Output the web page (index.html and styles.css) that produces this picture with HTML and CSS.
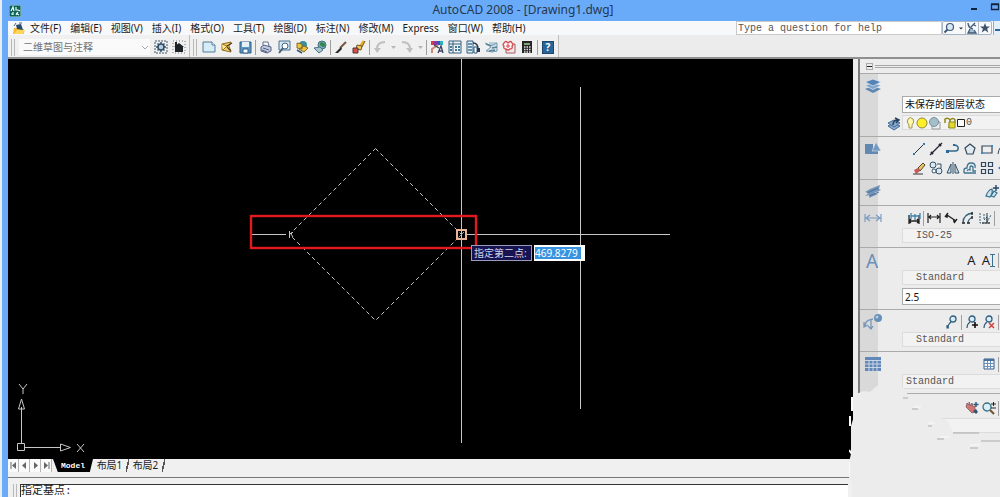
FILE: index.html
```html
<!DOCTYPE html>
<html lang="zh-CN">
<head>
<meta charset="utf-8">
<title>AutoCAD 2008 - [Drawing1.dwg]</title>
<link rel="stylesheet" href="styles.css">
</head>
<body>
<div class="window">
  <header class="titlebar">
    <svg class="app-icon" viewBox="0 0 12 12"><rect width="12" height="12" fill="#0d6158"/><path d="M0 0h12v12H0z" fill="none" stroke="#a9d8d0"/><path d="M2 6l2-4 1 4M7 2v3h2M9 5l2 1M2 9h2M4 7v3M7 8l3 2M7 10l2-3" stroke="#e8fff8" fill="none" stroke-width="1.2"/></svg>
    <h1 class="title">AutoCAD 2008 - [Drawing1.dwg]</h1>
    <div class="window-buttons">
      <button aria-label="最小化"><svg viewBox="0 0 10 10"><path d="M2 7h6" stroke="#14233c" stroke-width="2"/></svg></button>
      <button aria-label="最大化"><svg viewBox="0 0 10 10"><path d="M1.500 2.500h7v5h-7zM1 2h8" fill="none" stroke="#14233c" stroke-width="1.300"/></svg></button>
    </div>
  </header>

  <div class="frame">
    <nav class="menubar">
      <svg class="doc-icon" viewBox="0 0 12 13"><path d="M1 6h4l1 1h5v5H0z" fill="#f3bb2c"/><path d="M3 3l5-1 2 6-6-1z" fill="#27496d"/><path d="M1 4l2-3M6 1l3 0" stroke="#496780"/><path d="M1 12l3-4h8l-2 4z" fill="#ffd65b"/></svg>
      <button>文件(F)</button><button>编辑(E)</button><button>视图(V)</button><button>插入(I)</button><button>格式(O)</button><button>工具(T)</button><button>绘图(D)</button><button>标注(N)</button><button>修改(M)</button><button>Express</button><button>窗口(W)</button><button>帮助(H)</button>
      <input class="help-search" type="text" aria-label="Help" placeholder="Type a question for help">
      <div class="info-buttons">
        <button class="wide" aria-label="搜索"><svg viewBox="0 0 22 12"><circle cx="7" cy="5" r="3.500" fill="#d8e9f6" stroke="#3e5877" stroke-width="1.200"/><path d="M4.500 7.500L1.500 10.500" stroke="#3e5877" stroke-width="2"/><path d="M16 5.500h4l-2 2z" fill="#333"/></svg></button>
        <button aria-label="通讯中心"><svg viewBox="0 0 12 12"><path d="M2 1q0 5 5 6M5 5l4-4M8 3l2 1M4 7l-2 4h8l-2-3" fill="#a9bed2" stroke="#3e5877" stroke-width="1.300"/></svg></button>
        <button aria-label="收藏夹"><svg viewBox="0 0 12 12"><path d="M6 1l1.300 3.400L11 4.500 8.100 6.800 9.200 10.500 6 8.300 2.800 10.500 3.900 6.800 1 4.500l3.700-.1z" fill="#3e4f69"/></svg></button>
      </div>
      <button class="doc-minimize" aria-label="最小化文档"><svg viewBox="0 0 10 10"><path d="M3 7h6" stroke="#31649a" stroke-width="2"/></svg></button>
    </nav>

    <div class="toolbars">
      <div class="toolbar workspace">
        <i class="grip"></i>
        <select class="workspace-select" aria-label="工作空间" disabled><option>二维草图与注释</option></select>
        <button class="tool" aria-label="工作空间设置"><svg viewBox="0 0 14 14"><path d="M1 1h12v12H1z" fill="none" stroke="#40576d" stroke-dasharray="2 1"/><circle cx="7" cy="7" r="3" fill="#b9cee0" stroke="#304c66" stroke-width="1.500"/><path d="M7 2v2M7 10v2M2 7h2M10 7h2M3.500 3.500l1.500 1.500M9 9l1.500 1.500M10.500 3.500L9 5M5 9l-1.500 1.500" stroke="#304c66" stroke-width="1.400"/></svg></button>
        <button class="tool" aria-label="我的工作空间"><svg viewBox="0 0 14 14"><path d="M1 1h12v12H1z" fill="none" stroke="#777" stroke-dasharray="1 2"/><path d="M2 7l5-4 5 4h-1v5H3V7z" fill="#1e2225"/><path d="M4 2v4" stroke="#222" stroke-width="2"/></svg></button>
      </div>
      <div class="toolbar standard">
        <i class="grip"></i>
        <button class="tool" aria-label="新建"><svg viewBox="0 0 14 14"><path d="M1 2h9l3 3v7H1z" fill="#d6edf7" stroke="#527b98"/><path d="M10 2v3h3" fill="#fff" stroke="#527b98"/></svg></button>
        <button class="tool" aria-label="打开"><svg viewBox="0 0 14 14"><path d="M2 4l9-2-2 4 2 6-9-2z" fill="#f4cf61" stroke="#8a6c28"/><path d="M2 4l5 2-4 4" fill="#fae69a" stroke="#9c7425"/><path d="M7 6l5-3M7 7l4 4" stroke="#4b3c25" stroke-width="1.300"/></svg></button>
        <button class="tool" aria-label="保存"><svg viewBox="0 0 14 14"><path d="M2 2h11v11H2z" fill="#5b95c1" stroke="#315e87"/><path d="M4 2h7v5H4z" fill="#e5f1f9"/><path d="M5 9h5v4H5z" fill="#fff" stroke="#315e87"/></svg></button>
        <i class="sep"></i>
        <button class="tool" aria-label="打印"><svg viewBox="0 0 14 14"><path d="M4 5V2h5l1 4" fill="#fff" stroke="#656f8d"/><path d="M2 7l3-2 7 2v4l-4 2-6-2z" fill="#c3cae0" stroke="#515f80"/><path d="M4 8l6 2M3 10l5 2" stroke="#515f80"/></svg></button>
        <button class="tool" aria-label="打印预览"><svg viewBox="0 0 14 14"><path d="M2 1h11v9H2z" fill="#d5e7f2" stroke="#50718f"/><circle cx="8" cy="6" r="3" fill="#fff" stroke="#3e6486"/><path d="M6 8l-4 5" stroke="#45627c" stroke-width="2"/></svg></button>
        <button class="tool" aria-label="发布"><svg viewBox="0 0 14 14"><circle cx="8" cy="5" r="4" fill="#3b8e9e"/><path d="M2 3l5 1v5l-5-1zM4 9l5-3 4 2-4 4z" fill="#f1c43b" stroke="#816b28"/><path d="M2 10l5 3" stroke="#315671" stroke-width="1.500"/></svg></button>
        <button class="tool" aria-label="三维 DWF"><svg viewBox="0 0 14 14"><circle cx="9" cy="5" r="4" fill="#70a9c1" stroke="#45717f"/><path d="M8 2q-3 3 2 5 4-1 1-4z" fill="#378548"/><path d="M1 8l6-1 3 3-4 3z" fill="#a9c6cf" stroke="#4b7485"/></svg></button>
        <i class="sep"></i>
        <button class="tool" aria-label="特性匹配"><svg viewBox="0 0 14 14"><path d="M12 2L6 8" stroke="#765944" stroke-width="2"/><path d="M7 7l1 2-4 4H1z" fill="#292929"/></svg></button>
        <button class="tool" aria-label="块编辑器"><svg viewBox="0 0 14 14"><path d="M8 7l4-6" stroke="#e7ae2b" stroke-width="3"/><path d="M5 5l5 1-1 4-5-1z" fill="#f1c764" stroke="#6c5722"/><path d="M1 8h5v5H1z" fill="#d55145" stroke="#4e3835"/><path d="M13 1l-3 6" stroke="#775626"/></svg></button>
        <i class="sep"></i>
        <button class="tool" aria-label="放弃"><svg viewBox="0 0 14 14"><path d="M12 2Q4 2 4 9" fill="none" stroke="#bfc0c2" stroke-width="2"/><path d="M1 8h7l-4 5z" fill="#bfc0c2"/></svg></button>
        <button class="drop" aria-label="放弃列表"><svg viewBox="0 0 5 5"><path d="M0 1h5L2.500 4z" fill="#b6b6b6"/></svg></button>
        <button class="tool" aria-label="重做"><svg viewBox="0 0 14 14"><path d="M2 2q8 0 8 7" fill="none" stroke="#bfc0c2" stroke-width="2"/><path d="M6 8h7l-3 5z" fill="#bfc0c2"/></svg></button>
        <button class="drop" aria-label="重做列表"><svg viewBox="0 0 5 5"><path d="M0 1h5L2.500 4z" fill="#b6b6b6"/></svg></button>
        <i class="sep"></i>
        <button class="tool" aria-label="特性"><svg viewBox="0 0 14 14"><path d="M1 1h3v4H1z" fill="#d23d48"/><path d="M4 1h3v4H4z" fill="#8a36a4"/><path d="M7 1h3v4H7z" fill="#3159b7"/><path d="M10 1h3v4h-3z" fill="#32b0be"/><path d="M2 13V9l6-4" fill="none" stroke="#c98972" stroke-width="2"/><path d="M8 13l3-7 2 7M9 11h4M4 5l5 3" fill="none" stroke="#3b435c" stroke-width="1.300"/></svg></button>
        <button class="tool" aria-label="设计中心"><svg viewBox="0 0 14 14"><path d="M1 1h12v12H1z" fill="#eaf4f9" stroke="#395e7a"/><path d="M5 1v12M1 4h12" stroke="#395e7a"/><path d="M3 6v6M8 6v6M11 6v6" stroke="#417699" stroke-width="2" stroke-dasharray="2 1"/></svg></button>
        <button class="tool" aria-label="工具选项板"><svg viewBox="0 0 14 14"><path d="M1 1h6v12H1z" fill="#e5f1f7" stroke="#315b7a"/><path d="M2 4h4M2 7h4M2 10h4" stroke="#3a769d" stroke-width="1.500"/><path d="M7 3q5 0 5 6" fill="none" stroke="#29374a" stroke-width="1.500"/><path d="M8 7h3v6H8z" fill="#fff" stroke="#315b7a"/><path d="M11 8h3v4h-3z" fill="#29374a"/></svg></button>
        <button class="tool" aria-label="图纸集管理器"><svg viewBox="0 0 14 14"><path d="M5 2h8v10H6z" fill="#b5cedc"/><path d="M1 3l6 3 6-3v8l-5 1-6-1 5-4" fill="#d1e1ea" stroke="#779caf"/><path d="M2 4l5 2M8 8l5-1M5 11l6-1" stroke="#5a8298" stroke-width="1.500"/></svg></button>
        <button class="tool" aria-label="标记集管理器"><svg viewBox="0 0 14 14"><path d="M4 4h9v9H4z" fill="#f2e8e8" stroke="#a35b62"/><path d="M2 3q2-3 4 0 3-3 4 0 2 2 0 3 1 3-2 3-2 2-4 0-3 0-2-3-2-1 0-3z" fill="#fff2f2" stroke="#d34951" stroke-width="1.300"/><path d="M4 6h4M6 4v4" stroke="#d34951"/></svg></button>
        <button class="tool" aria-label="快速计算器"><svg viewBox="0 0 14 14"><path d="M2 1h10v12H2z" fill="#252525"/><path d="M4 3h6v2H4z" fill="#80a777"/><path d="M4 7h7M4 9.500h7M4 12h7" stroke="#e3e3e3" stroke-width="1.300" stroke-dasharray="1.500 1"/></svg></button>
        <i class="sep"></i>
        <button class="tool help" aria-label="帮助"><span>?</span></button>
      </div>
    </div>

    <div class="workspace-area">
      <main class="document">
        <section class="canvas" aria-label="绘图区">
          <svg class="drawing" width="845" height="401" viewBox="0 0 845 401">
            <g fill="none" stroke="#c7c7c7">
              <path d="M367.500 90.500l86 86-86 86-86-86z" stroke-dasharray="4 3"/>
              <path d="M453.500 1v384M572.500 29v322M244 176.500h34M458 176.500h204"/>
              <path d="M281.500 173v7M285 174l-2 2 2 3"/>
              <path d="M9.500 385.500h7v7h-7zM13.500 385v-36M17 389.500h35M10.500 351l3-10 3 10zM52.500 386v7l10-3.500z"/>
              <path d="M11 326l4 5 4-5M15 331v5M69 386l7 8M76 386l-7 8"/>
            </g>
            <rect x="243" y="158" width="225" height="32" fill="none" stroke="#e01a1e" stroke-width="2.400"/>
            <rect x="449" y="172" width="9" height="9" fill="none" stroke="#eab498" stroke-width="2"/>
            <path d="M451 179l5-5" stroke="#aaa"/>
          </svg>
          <div class="prompt">
            <label for="point">指定第二点:</label>
            <div class="point-box"><input id="point" type="text" value="469.8279"></div>
          </div>
        </section>
        <nav class="sheet-tabs">
          <button class="step" aria-label="第一个"><svg viewBox="0 0 9 9"><path d="M2 1v7" stroke="#666"/><path d="M7 1v7L3 4.500z" fill="#666"/></svg></button>
          <button class="step" aria-label="上一个"><svg viewBox="0 0 9 9"><path d="M6 1v7L2 4.500z" fill="#666"/></svg></button>
          <button class="step" aria-label="下一个"><svg viewBox="0 0 9 9"><path d="M3 1v7l4-3.500z" fill="#666"/></svg></button>
          <button class="step" aria-label="最后一个"><svg viewBox="0 0 9 9"><path d="M7 1v7" stroke="#666"/><path d="M2 1v7l4-3.500z" fill="#666"/></svg></button>
          <button class="sheet active">Model</button>
          <button class="sheet">布局1</button><i class="slash"></i>
          <button class="sheet">布局2</button><i class="slash"></i>
        </nav>
        <div class="command">
          <i class="grip"></i>
          <output class="command-line">指定基点:</output>
        </div>
      </main>

      <aside class="dashboard">
        <div class="dash-head"><button aria-label="收起"></button><i></i></div>

        <section class="panel layers">
          <div class="side"><svg viewBox="0 0 16 16"><path d="M0 11l8-3 8 3-8 4z" fill="#5f87b0"/><path d="M0 7.500l8-3 8 3-8 4z" fill="#7fa5cb" stroke="#e4ebf2" stroke-width=".7"/><path d="M0 4l8-3 8 3-8 4z" fill="#5684b5" stroke="#e4ebf2" stroke-width=".7"/></svg></div>
          <div class="body">
            <select class="field white" aria-label="图层状态"><option>未保存的图层状态</option></select>
            <div class="layer-row">
              <button class="mini outside" aria-label="图层管理"><svg viewBox="0 0 14 14"><path d="M1 9l6-3 6 3-6 4z" fill="#8bacce" stroke="#406b97"/><path d="M1 6l6-3 6 3-6 4z" fill="#8bacce" stroke="#406b97"/><path d="M6 8q0-5 5-5M8 1l4 2-3 3" fill="none" stroke="#27415f" stroke-width="1.500"/></svg></button>
              <div class="field layer-field">
                <svg viewBox="0 0 60 14"><path d="M5 9Q2 6 4 3t5 0q2 3-1 6v3H5z" fill="#fff9a8" stroke="#9c974d"/><circle cx="18" cy="7" r="5" fill="#ffef28" stroke="#8c8b39"/><path d="M28 6h8v7h-8z" fill="#eee" stroke="#999"/><circle cx="30" cy="6" r="4.500" fill="#a5bfc9" stroke="#76929e"/><path d="M41 7V3q3-2 5 1l-1 8M46 6V4q3-3 5 0v3" fill="none" stroke="#8f8919" stroke-width="1.500"/><path d="M45 6h6v6h-6z" fill="#e5d82f" stroke="#8f8919"/><path d="M53.500 3.500h7v7h-7z" fill="#fff" stroke="#222"/></svg><span>0</span>
              </div>
            </div>
          </div>
        </section>

        <section class="panel draw">
          <div class="side"><svg viewBox="0 0 16 16"><path d="M0 3h8v10H0z" fill="#6288b1"/><path d="M4 13h9v-3H7z" fill="#6288b1"/><path d="M11 1l5 9H7z" fill="#7699bf" stroke="#e0e7ee" stroke-width=".6"/></svg></div>
          <div class="body">
            <div class="tools five">
              <button class="mini" aria-label="直线"><svg viewBox="0 0 14 14"><path d="M2 12L12 2" stroke="#234"/><path d="M1 11h2v2H1zM11 1h2v2h-2z" fill="#347aa8"/></svg></button>
              <button class="mini" aria-label="构造线"><svg viewBox="0 0 14 14"><path d="M1 13L13 1" stroke="#223" stroke-width="1.300"/><path d="M2 10l2 2M10 2l2 2" stroke="#223" stroke-width="2"/></svg></button>
              <button class="mini" aria-label="多段线"><svg viewBox="0 0 14 14"><path d="M1 9h8q4 0 3-4-1-2-4-2" fill="none" stroke="#346787" stroke-width="1.500"/><path d="M0 8h3v3H0zM7 2h2v2H7z" fill="#246b9c"/></svg></button>
              <button class="mini" aria-label="正多边形"><svg viewBox="0 0 14 14"><path d="M7 2l5 4-2 6H4L2 6z" fill="#e2eaf0" stroke="#33485d" stroke-width="1.200"/></svg></button>
              <button class="mini" aria-label="矩形"><svg viewBox="0 0 14 14"><path d="M2 4h10v7H2z" fill="#eee" stroke="#33485d" stroke-width="1.200"/><path d="M11 3h2v2h-2zM1 10h2v2H1z" fill="#348ac1"/></svg></button>
              <button class="mini" aria-label="圆弧"><svg viewBox="0 0 14 14"><path d="M1 12q1-8 7-9" fill="none" stroke="#33485d"/></svg></button>
            </div>
            <div class="tools five">
              <button class="mini" aria-label="删除"><svg viewBox="0 0 14 14"><path d="M6 7l5-5 2 2-5 6z" fill="#e8c467" stroke="#554630"/><path d="M2 9l4-2 2 3-4 3z" fill="#c9575a"/><path d="M1 13h10" stroke="#333"/></svg></button>
              <button class="mini" aria-label="复制"><svg viewBox="0 0 14 14"><circle cx="4" cy="4" r="3" fill="#dae7ef" stroke="#345069"/><circle cx="10" cy="10" r="3" fill="#dae7ef" stroke="#345069"/><circle cx="5" cy="10" r="2" fill="#fff" stroke="#345069"/><path d="M8 3h4v4" fill="none" stroke="#345069"/></svg></button>
              <button class="mini" aria-label="镜像"><svg viewBox="0 0 14 14"><path d="M5 3v9H1zM9 3v9h4z" fill="#c7dce9" stroke="#345069"/><path d="M7 1v12" stroke="#345069"/></svg></button>
              <button class="mini" aria-label="偏移"><svg viewBox="0 0 14 14"><path d="M1 12V9q0-2 3-2 0-5 4-5 5 0 4 5M1 12h12M4 10q1-2 3-1V6q1-2 3 0v4h3" fill="none" stroke="#3c7190" stroke-width="1.300"/></svg></button>
              <button class="mini" aria-label="阵列"><svg viewBox="0 0 14 14"><path d="M1.500 1.500h4v4h-4zM8.500 1.500h4v4h-4zM1.500 8.500h4v4h-4zM8.500 8.500h4v4h-4z" fill="#e5edf1" stroke="#30475d" stroke-width="1.200"/></svg></button>
              <button class="mini" aria-label="移动"><svg viewBox="0 0 14 14"><path d="M1 7l4-3v6z" fill="#3a7aa1"/></svg></button>
            </div>
          </div>
        </section>

        <section class="panel surface">
          <div class="side"><svg viewBox="0 0 16 16"><path d="M0 8l5-3 10-4-1 4 2 1-7 3 4 1-9 4 1-3-5 1 4-3z" fill="#7394b8"/><path d="M2 9l11-5M4 12l10-4" stroke="#4c7099"/></svg></div>
          <div class="body"><div class="tools end"><button class="mini" aria-label="曲面"><svg viewBox="0 0 14 14"><path d="M1 11q2-6 6-7 1 4-2 8zM6 11l3-5 3 2-3 4z" fill="#cfe3ed" stroke="#37718f" stroke-width="1.200"/><path d="M8 3h6M11 0v6" stroke="#214665" stroke-width="1.400"/></svg></button></div></div>
        </section>

        <section class="panel dimension">
          <div class="side"><svg viewBox="0 0 16 16"><path d="M0 4v8M16 4v8M1 8h14M5 5L1 8l4 3M11 5l4 3-4 3" fill="none" stroke="#7c9cbf" stroke-width="1.200"/></svg></div>
          <div class="body">
            <div class="tools dims">
              <button class="mini" aria-label="快速标注"><svg viewBox="0 0 14 14"><path d="M2 4v9M12 4v9M2 10h10M4 8l-2 2 2 2M10 8l2 2-2 2" fill="none" stroke="#222" stroke-width="1.300"/><path d="M4 2v6M13 2v6M4 5h9M8 3v6" stroke="#3f82ad" stroke-width="1.300"/></svg></button>
              <i class="sep"></i>
              <button class="mini" aria-label="线性"><svg viewBox="0 0 14 14"><path d="M1 2v10M13 2v10M2 6h10M4 4L2 6l2 2M10 4l2 2-2 2" fill="none" stroke="#222" stroke-width="1.200"/></svg></button>
              <button class="mini" aria-label="对齐"><svg viewBox="0 0 14 14"><path d="M4 2L1 6M13 8l-3 4M3 4l9 6M3 4v3M12 10H9" fill="none" stroke="#222" stroke-width="1.400"/></svg></button>
              <button class="mini" aria-label="弧长"><svg viewBox="0 0 14 14"><path d="M2 12Q2 3 12 2M7 12q0-4 5-6" fill="none" stroke="#34617d" stroke-width="1.300"/><path d="M1 12h3M6 12h3M11 1v3M11 5v3" stroke="#222" stroke-width="1.300"/></svg></button>
              <button class="mini" aria-label="坐标"><svg viewBox="0 0 14 14"><path d="M2 2v10h11M6 3v6l3-3v5l4-7" fill="none" stroke="#34617d" stroke-dasharray="2 1"/><path d="M9 2v10M4 12h8" stroke="#333"/></svg></button>
              <i class="sep"></i>
              <button class="mini" aria-label="半径"><svg viewBox="0 0 14 14"><circle cx="8" cy="7" r="5" fill="none" stroke="#555"/></svg></button>
            </div>
            <select class="field indent" aria-label="标注样式"><option>ISO-25</option></select>
          </div>
        </section>

        <section class="panel text">
          <div class="side"><span class="letter">A</span></div>
          <div class="body">
            <div class="tools end"><button class="mini letter-tool">A</button><button class="mini letter-tool" aria-label="单行文字">A<svg class="caret" viewBox="0 0 5 13"><path d="M0 .5h5M0 12.500h5M2.500 0v13" stroke="#397090"/></svg></button><i class="sep"></i></div>
            <select class="field indent" aria-label="文字样式"><option>Standard</option></select>
            <input class="field white height" type="text" aria-label="文字高度" value="2.5">
          </div>
        </section>

        <section class="panel leader">
          <div class="side"><svg viewBox="0 0 16 16"><circle cx="13" cy="4" r="4" fill="#688fb8"/><circle cx="12" cy="3" r="1.500" fill="#b0cae3"/><path d="M0 12q0-6 8-7M6 6v9M3 12l3 3 2-3M-1 8v5l4-2" fill="none" stroke="#7897b8" stroke-width="1.300"/></svg></div>
          <div class="body">
            <div class="tools end">
              <button class="mini" aria-label="多重引线"><svg viewBox="0 0 14 14"><circle cx="8" cy="4" r="3" fill="#d8edf7" stroke="#315d7d" stroke-width="1.300"/><path d="M6 7q-3 2-3 6M2 10v3h2" fill="none" stroke="#315d7d" stroke-width="1.200"/></svg></button>
              <i class="sep"></i>
              <button class="mini" aria-label="添加引线"><svg viewBox="0 0 14 14"><circle cx="7" cy="4" r="3" fill="#d8edf7" stroke="#315d7d" stroke-width="1.300"/><path d="M5 7q-3 2-3 6" fill="none" stroke="#315d7d" stroke-width="1.200"/><path d="M7 10h6M10 7v6" stroke="#111" stroke-width="1.600"/></svg></button>
              <button class="mini" aria-label="删除引线"><svg viewBox="0 0 14 14"><circle cx="7" cy="4" r="3" fill="#d8edf7" stroke="#315d7d" stroke-width="1.300"/><path d="M5 7q-3 2-3 6" fill="none" stroke="#315d7d" stroke-width="1.200"/><path d="M7 8l5 5M12 8l-5 5" stroke="#d64040" stroke-width="1.500"/></svg></button>
              <i class="sep"></i>
            </div>
            <select class="field indent" aria-label="引线样式"><option>Standard</option></select>
          </div>
        </section>

        <section class="panel table">
          <div class="side"><svg viewBox="0 0 16 16"><path d="M0 1h16v14H0z" fill="#6387b6"/><path d="M0 4.500h16M0 8h16M0 11.500h16M4 4v11M8 4v11M12 4v11" stroke="#dce7f1" stroke-width=".8"/></svg></div>
          <div class="body">
            <div class="tools end"><button class="mini" aria-label="表格"><svg viewBox="0 0 14 14"><path d="M2 2h10v10H2z" fill="#f6faff" stroke="#345f8d"/><path d="M2 3h10" stroke="#47729f" stroke-width="2"/><path d="M2 6.500h10M2 9.500h10M5.500 4v8M8.500 4v8" stroke="#6c91b6"/></svg></button><i class="sep"></i></div>
            <select class="field" aria-label="表格样式"><option>Standard</option></select>
          </div>
        </section>

        <section class="panel navigate">
          <div class="side"></div>
          <div class="body">
            <div class="tools end"><button class="mini" aria-label="平移"><svg viewBox="0 0 14 14"><path d="M2 2l2 2V1l2 4 1-3 1 4 2-1v6l-3 1-4-4-2-2z" fill="#d47575" stroke="#735056" stroke-width=".7"/><path d="M11 1v5M8.500 3.500h5" stroke="#285779" stroke-width="1.400"/><path d="M8 10l3-2 2 3-2 2z" fill="#345572"/></svg></button><button class="mini" aria-label="缩放"><svg viewBox="0 0 14 14"><circle cx="5" cy="6" r="4" fill="#d9eff5" stroke="#397087" stroke-width="1.300"/><path d="M8 9l4 4" stroke="#74502e" stroke-width="2"/><path d="M9 3h5M11.500 1v4M9 7h5" stroke="#222"/></svg></button><i class="sep"></i></div>
            <div class="field"></div>
          </div>
        </section>
      </aside>
    </div>
  </div>

  <svg class="torn-edge" width="151" height="113" viewBox="0 0 151 113" aria-hidden="true">
    <path d="M3 113V99l-3-4V78l2-8V42l3-10-2-9 4-13 8-3 6 1 8-7 22-1 9 12 9 2 3 8 15 4 4 8 8 3 6 13 22 2 7 10h18v60z" fill="#ececec"/>
    <path d="M3 13v14M1 32v10M0 66l3 4M0 78v14" stroke="#fafafa" stroke-width="2" fill="none"/>
    <path d="M54 14h5M63 25h6M79 42h4M88 55h7M104 49h26M121 64h8M132 57h19" stroke="#aaa" fill="none"/>
    <path d="M64 23h8M79 39h7M91 53h9M121 61h10" stroke="#fafafa" fill="none"/>
  </svg>
</div>
</body>
</html>
```
FILE: styles.css
```css
* { box-sizing: border-box; }

body {
  margin: 0;
  overflow: hidden;
  font: 10px/14px "Noto Sans", "Noto Sans CJK SC", sans-serif;
  color: #1b1b1b;
}

button {
  display: flex;
  align-items: center;
  justify-content: center;
  flex: none;
  margin: 0;
  padding: 0;
  border: 0;
  background: none;
  color: inherit;
  font: inherit;
  white-space: nowrap;
}

input, select {
  min-width: 0;
  margin: 0;
  border-radius: 0;
  font: inherit;
}

select { appearance: none; }
svg { display: block; flex: none; }

.window {
  position: relative;
  display: flex;
  flex-direction: column;
  height: 100vh;
  overflow: hidden;
  border-left: 2px solid #e8edf2;
  background: #69abf9;
}

.titlebar {
  display: flex;
  align-items: center;
  flex: none;
  height: 21px;
  padding-left: 7px;
  color: #25384f;
}
.app-icon { width: 12px; height: 12px; }
.title {
  flex: 1;
  margin: 0;
  padding-left: 56px;
  padding-bottom: 2px;
  text-align: center;
  font-size: 12px;
  line-height: 18px;
  font-weight: 400;
}
.window-buttons { display: flex; gap: 11px; padding-bottom: 8px; }
.window-buttons svg { width: 10px; height: 10px; }

.frame {
  display: flex;
  flex-direction: column;
  flex: 1;
  min-height: 0;
  margin-left: 6px;
  background: #ececec;
}

.menubar {
  display: flex;
  align-items: center;
  flex: none;
  gap: 9px;
  height: 14px;
  padding-left: 5px;
  background: #f7f8f9;
}
.doc-icon { width: 12px; height: 13px; margin-right: -4px; }
.help-search {
  width: 206px;
  height: 14px;
  margin-left: auto;
  padding: 0 1px;
  border: 1px solid #c9c9c9;
  background: #fff;
  font: 10px/12px "Liberation Mono", monospace;
}
.help-search::placeholder { color: #555; opacity: 1; }
.info-buttons {
  display: flex;
  margin-left: -9px;
  border: 1px solid #a8b6c4;
  border-radius: 2px;
}
.info-buttons button { width: 13px; height: 12px; border-left: 1px solid #a8b6c4; }
.info-buttons .wide { width: 22px; border-left: 0; }
.info-buttons svg { width: 12px; height: 12px; }
.info-buttons .wide svg { width: 22px; }
.doc-minimize {
  width: 7px;
  height: 14px;
  margin-left: -8px;
  border-left: 1px solid #87b1d8;
  background: #e2f0fb;
}
.doc-minimize svg { width: 10px; height: 10px; }

.toolbars {
  display: flex;
  flex: none;
  height: 24px;
  border-bottom: 2px solid #8f8f8f;
}
.toolbar {
  display: flex;
  align-items: center;
  padding: 3px 1px 1px 3px;
  border-right: 1px solid #bdbdbd;
  background: #f0f0f0;
}
.workspace { width: 182px; }
.grip {
  flex: none;
  width: 4px;
  height: 17px;
  margin: 0 4px 0 0;
  border: solid #b8b8b8;
  border-width: 0 1px;
}
.standard .grip { margin-right: 3px; }
.workspace-select {
  width: 132px;
  height: 16px;
  margin-right: 2px;
  padding: 0 4px;
  border: 0;
  background:
    linear-gradient(45deg, transparent 40%, #aaa 40% 65%, transparent 65%) no-repeat 123px 7px / 3px 3px,
    linear-gradient(-45deg, transparent 40%, #aaa 40% 65%, transparent 65%) no-repeat 126px 7px / 3px 3px,
    #fafafa;
  color: #727272;
  opacity: 1;
  line-height: 16px;
}
.tool { width: 18px; height: 18px; }
.tool svg { width: 14px; height: 14px; }
.drop { width: 9px; height: 16px; }
.drop svg { width: 5px; height: 5px; }
.sep { flex: none; width: 1px; height: 15px; margin: 0 1px; background: #9f9f9f; }
.help span {
  width: 12px;
  height: 13px;
  border: 1px solid #20466c;
  background: #27659a;
  color: #fff;
  font-weight: 700;
  line-height: 11px;
}

.workspace-area { display: flex; flex: 1; min-height: 0; }
.document { display: flex; flex-direction: column; flex: 1; min-width: 0; }

.canvas {
  position: relative;
  flex: 1;
  min-height: 0;
  margin-right: 5px;
  overflow: hidden;
  background: #000;
}
.drawing { margin-top: -1px; }
.prompt {
  position: absolute;
  top: 186px;
  left: 463px;
  display: flex;
  gap: 2px;
}
.prompt label {
  width: 61px;
  height: 16px;
  padding-left: 2px;
  border: 1px solid #9a9abb;
  background: #171351;
  color: #d5d5ed;
  white-space: nowrap;
}
.point-box { width: 51px; height: 16px; padding: 2px 1px; background: #fff; }
.point-box input {
  display: block;
  width: 46px;
  height: 12px;
  padding: 0;
  border: 0;
  background: #3793df;
  color: #fff;
  line-height: 12px;
}

.sheet-tabs {
  display: flex;
  flex: none;
  height: 15px;
  margin-right: 5px;
  background: #f0f0f0;
}
.step { width: 11px; height: 13px; border-right: 1px solid #b4b4b4; background: #fafafa; }
.step svg { width: 9px; height: 9px; }
.sheet { width: 33px; height: 13px; line-height: 13px; }
.sheet.active {
  width: 40px;
  margin-left: 1px;
  background: #000;
  color: #fff;
  clip-path: polygon(0 0, 100% 0, 92% 100%, 12% 100%);
  font: 700 8px/13px "Liberation Mono", monospace;
}
.slash {
  width: 3px;
  height: 13px;
  background: linear-gradient(105deg, transparent 35%, #555 35% 65%, transparent 65%);
}

.command {
  display: flex;
  flex: none;
  height: 23px;
  padding: 10px 10px 0 5px;
  background: #f0f0f0;
  box-shadow: inset 0 3px #f0f0f0, inset 0 4px #777;
}
.command .grip { height: 13px; margin-right: 3px; }
.command-line {
  flex: 1;
  height: 13px;
  border-top: 1px solid #333;
  border-left: 1px solid #333;
  background: #fff;
  font: 11px/12px "Liberation Mono", "Noto Sans CJK SC", monospace;
}

.dashboard {
  flex: none;
  width: 142px;
  overflow: hidden;
  border-left: 2px solid #7c7c7c;
  background: #ececec;
}
.dash-head { display: flex; align-items: center; gap: 2px; height: 14px; padding-left: 6px; }
.dash-head button { width: 7px; height: 7px; border: 1px solid #aaa; background: linear-gradient(#222, #222) center / 5px 1px no-repeat; }
.dash-head i { flex: 1; height: 3px; border: solid #a8a8a8; border-width: 1px 0; }

.panel { display: flex; border-top: 1px solid #aaa; }
.side { flex: none; width: 18px; padding-top: 4px; background: #d9d9d9; }
.side svg { width: 16px; height: 16px; margin-left: 5px; overflow: visible; }
.letter { display: block; margin-left: 6px; color: #6a8fb8; font-size: 19px; line-height: 18px; }
.body { flex: 1; min-width: 0; padding: 2px 0 4px 24px; }

.field {
  display: block;
  width: 100%;
  height: 15px;
  padding: 0 3px;
  border: solid #dcdcdc;
  border-width: 1px 0 1px 1px;
  background: #f2f2f2;
  color: #555;
  font: 10px/13px "Liberation Mono", monospace;
}
.field.white {
  height: 17px;
  padding: 0 2px;
  border-color: #aaa;
  background: #fff;
  color: #111;
  font: 10px/15px "Noto Sans", "Noto Sans CJK SC", sans-serif;
}
.indent { padding-left: 13px; }
.height { margin-top: 3px; }

.layers .body { padding-top: 22px; }
.layer-row { display: flex; margin: 2px 0 0 -16px; }
.mini { width: 17px; height: 17px; }
.mini svg { width: 14px; height: 14px; }
.outside { width: 16px; }
.layer-field { display: flex; align-items: center; flex: 1; padding: 0 1px; }
.layer-field svg { width: 60px; height: 14px; overflow: visible; }
.layer-field span { margin-left: 2px; }

.tools { display: flex; align-items: center; height: 20px; }
.five { height: 19px; margin-left: 8px; }
.draw .body { padding-bottom: 2px; }
.end { justify-content: flex-end; }
.surface .body { padding-bottom: 3px; }
.dims { margin-left: 3px; }
.mini.letter-tool { font-size: 13px; }
.letter-tool .caret { width: 5px; height: 13px; }
.navigate .body { padding: 4px 0 0 24px; }

.torn-edge {
  position: absolute;
  right: 0;
  bottom: 0;
  pointer-events: none;
}
```
